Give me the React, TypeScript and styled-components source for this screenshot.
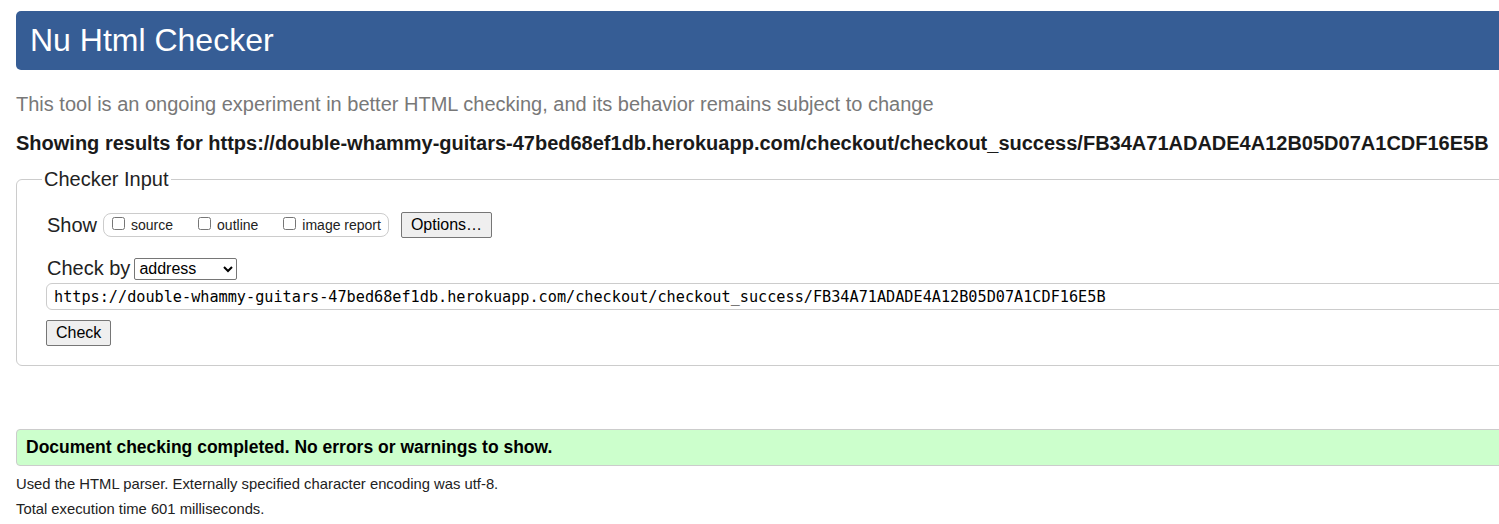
import React from "react";
import styled, { createGlobalStyle } from "styled-components";

const Global = createGlobalStyle`
  html, body { margin: 0; padding: 0; background: #fff; overflow: hidden; }
  body { font-family: "Liberation Sans", Arial, sans-serif; color: #222; }
`;

const Page = styled.div`
  width: 1580px;
  padding: 11px 0 0 16px;
  box-sizing: border-box;
`;

const Header = styled.h1`
  margin: 0;
  height: 59px;
  background: #365d95;
  border-radius: 5px;
  color: #fff;
  font-size: 32px;
  font-weight: normal;
  line-height: 59px;
  padding-left: 14px;
`;

const Tagline = styled.p`
  margin: 22px 0 0;
  font-size: 20px;
  line-height: 24px;
  color: #787878;
`;

const Results = styled.p`
  margin: 16px 0 0;
  font-size: 20px;
  line-height: 23px;
  font-weight: bold;
  color: #1a1a1a;
`;

const Fieldset = styled.fieldset`
  margin: 13px 0 0;
  padding: 10px 30px 19px 30px;
  border: 1px solid #ccc;
  border-radius: 6px;
  min-width: 0;
`;

const Legend = styled.legend`
  font-size: 20px;
  padding: 0 2px;
  margin-left: -5px;
  color: #222;
`;

const Row = styled.div<{ $top: number; $gap: number }>`
  display: flex;
  align-items: center;
  gap: ${(p) => p.$gap}px;
  margin-top: ${(p) => p.$top}px;
  font-size: 20px;
`;

const Label = styled.span`
  font-size: 20px;
  color: #222;
`;

const Group = styled.div`
  display: flex;
  align-items: center;
  height: 22px;
  border: 1px solid #ccc;
  border-radius: 8px;
  padding: 0 7px 0 8px;
  margin-right: 6px;
`;

const CheckItem = styled.label<{ $last?: boolean }>`
  display: flex;
  align-items: center;
  font-size: 14px;
  color: #222;
  margin-right: ${(p) => (p.$last ? "0" : "25px")};
`;

const Box = styled.input`
  width: 13px;
  height: 13px;
  margin: -4px 6px 0 0;
`;

const Button = styled.button<{ $h: number; $top?: number }>`
  font-family: "Liberation Sans", Arial, sans-serif;
  font-size: 16px;
  color: #000;
  background: #efefef;
  border: 1px solid #767676;
  border-radius: 2px;
  padding: 0 9px;
  height: ${(p) => p.$h}px;
  margin-top: ${(p) => p.$top ?? 0}px;
`;

const CheckButton = styled(Button)`
  margin-left: -1px;
`;

const Select = styled.select`
  font-family: "Liberation Sans", Arial, sans-serif;
  font-size: 16px;
  width: 103px;
  height: 22px;
  border: 1px solid #767676;
  border-radius: 2px;
  background: #fff;
  color: #000;
`;

const UrlInput = styled.input`
  display: block;
  width: 1520px;
  height: 27px;
  box-sizing: border-box;
  margin: 3px 0 0 -1px;
  padding: 0 7px;
  border: 1px solid #ccc;
  border-radius: 6px;
  font-family: "DejaVu Sans Mono", "Liberation Mono", monospace;
  font-size: 15.2px;
  color: #000;
`;

const Success = styled.div`
  margin-top: 63px;
  height: 37px;
  box-sizing: border-box;
  background: #ccffcc;
  border: 1px solid #ccc;
  border-radius: 4px;
  padding-left: 9px;
  font-weight: bold;
  font-size: 17.5px;
  line-height: 35px;
  color: #000;
`;

const Note = styled.p<{ $top: number }>`
  margin: ${(p) => p.$top}px 0 0;
  font-size: 14.8px;
  line-height: 17px;
  color: #222;
`;

const url =
  "https://double-whammy-guitars-47bed68ef1db.herokuapp.com/checkout/checkout_success/FB34A71ADADE4A12B05D07A1CDF16E5B";

export default function App() {
  return (
    <>
      <Global />
      <Page>
        <Header>Nu Html Checker</Header>
        <Tagline>
          This tool is an ongoing experiment in better HTML checking, and its behavior remains subject to change
        </Tagline>
        <Results>Showing results for {url}</Results>
        <Fieldset>
          <Legend>Checker Input</Legend>
          <Row $top={11} $gap={6}>
            <Label>Show</Label>
            <Group>
              <CheckItem>
                <Box type="checkbox" />
                source
              </CheckItem>
              <CheckItem>
                <Box type="checkbox" />
                outline
              </CheckItem>
              <CheckItem $last>
                <Box type="checkbox" />
                image report
              </CheckItem>
            </Group>
            <Button $h={26}>Options…</Button>
          </Row>
          <Row $top={19} $gap={4}>
            <Label>Check by</Label>
            <Select defaultValue="address">
              <option value="address">address</option>
              <option value="file">file upload</option>
              <option value="text">text input</option>
            </Select>
          </Row>
          <UrlInput defaultValue={url} />
          <CheckButton $h={26} $top={10}>Check</CheckButton>
        </Fieldset>
        <Success>Document checking completed. No errors or warnings to show.</Success>
        <Note $top={10}>Used the HTML parser. Externally specified character encoding was utf-8.</Note>
        <Note $top={8}>Total execution time 601 milliseconds.</Note>
      </Page>
    </>
  );
}
